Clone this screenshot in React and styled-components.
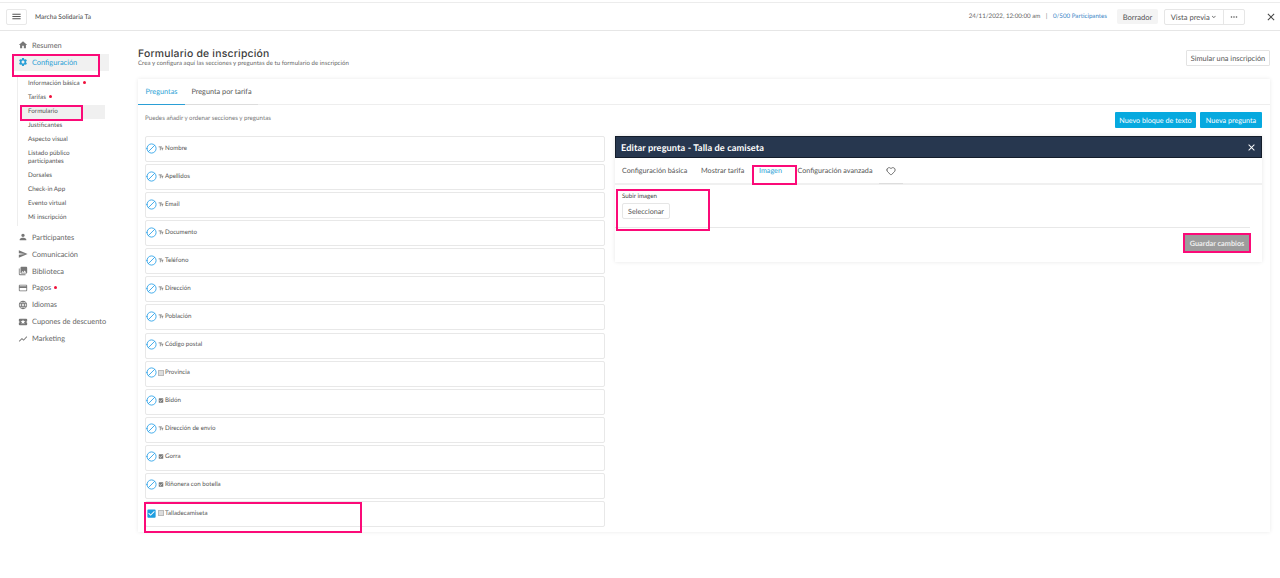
import React from 'react';
import styled, { createGlobalStyle } from 'styled-components';
import {
  MdHome, MdSettings, MdPerson, MdSend, MdPhotoLibrary, MdCreditCard, MdLanguage,
  MdLocalActivity, MdShowChart, MdMenu, MdClose, MdCheckBox, MdTextFields, MdMoreHoriz, MdKeyboardArrowDown,
} from 'react-icons/md';
import { Ban, Heart } from 'lucide-react';

const Global = createGlobalStyle`
  html, body { margin: 0; padding: 0; background: #fff; }
  * { box-sizing: border-box; text-rendering: geometricPrecision; }
  body { font-family: Lato, "Open Sans", sans-serif; color: #555; }
`;

const Page = styled.div`
  position: relative;
  width: 1280px;
  height: 578px;
  overflow: hidden;
  background: #fff;
  padding-top: 2px;
`;

const Header = styled.header`
  height: 29px;
  display: flex;
  align-items: center;
  border-top: 1px solid #ececec;
  border-bottom: 1px solid #e6e6e6;
  padding: 0 3px 0 6px;
`;
const MenuButton = styled.div`
  width: 21px; height: 16px;
  display: flex; align-items: center; justify-content: center;
  border: 1px solid #e8e8e8; border-radius: 2px; color: #555; font-size: 11px;
`;
const EventName = styled.span`
  margin-left: 8px; font-size: 6.6px; color: #444; flex: 1;
`;
const DateText = styled.span`font-size: 6.2px; color: #666;`;
const Sep = styled.span`font-size: 6.5px; color: #888; margin: 0 5.5px;`;
const Count = styled.span`font-size: 6.2px; color: #3d85c6; margin-right: 10px; white-space: nowrap;`;
const Badge = styled.span`
  width: 41px; height: 15px; display: flex; align-items: center; justify-content: center;
  font-size: 7.6px; color: #555; background: #f4f4f4; border-radius: 2px; margin-right: 6px;
`;
const Group = styled.div`
  display: flex; height: 16px; border: 1px solid #e6e6e6; border-radius: 2px; margin-right: 20px;
`;
const GroupItem = styled.div`
  display: flex; align-items: center; justify-content: center;
  width: ${p => p.$w}px; font-size: 7.6px; color: #555; white-space: nowrap;
  & + & { border-left: 1px solid #e6e6e6; }
`;
const CloseBtn = styled.div`
  width: 12px; display: flex; color: #444; font-size: 12px;
`;

const Body = styled.div`display: flex; align-items: flex-start;`;

const Sidebar = styled.nav`
  width: 138px; flex-shrink: 0; padding: 6px 29px 0 14px;
`;
const NavItem = styled.div`
  height: 16.9px; display: flex; align-items: center; gap: 4px; white-space: nowrap;
  font-size: 7.4px; color: ${p => (p.$active ? '#2a9fd6' : '#666')};
  & > svg { flex-shrink: 0; font-size: 10px; color: ${p => (p.$active ? '#2a9fd6' : '#777')}; margin-left: 4px; }
`;
const ActiveNav = styled(NavItem)`
  background: #f1f1f1; width: 95px;
`;
const SubList = styled.div`
  margin: 6px 0 3px 3px; border-left: 1px solid #eee; padding: 0 0 1px 3px;
  width: 88px;
`;
const SubItem = styled.div`
  min-height: 14px; padding: 3px 0 3px 7px; line-height: 8px;
  font-size: 6.3px; color: #555;
  background: ${p => (p.$active ? '#f0f0f0' : 'transparent')};
`;
const Dot = styled.i`
  display: inline-block; width: 3px; height: 3px; border-radius: 50%;
  background: #f0103c; margin-left: 3px; vertical-align: 1px;
`;

const Main = styled.main`
  flex: 1; padding: 17px 10px 0 0;
`;
const TitleRow = styled.div`
  display: flex; justify-content: space-between; align-items: flex-start; height: 31px;
`;
const Title = styled.h1`
  margin: 0; font: 500 10.4px/12px Inter, "Open Sans", sans-serif; letter-spacing: .22px; color: #3b3b3b;
`;
const Subtitle = styled.p`
  margin: 0; font-size: 6.1px; line-height: 7px; color: #666; letter-spacing: .04px;
`;
const SimButton = styled.button`
  width: 84px; height: 16px; padding: 0; margin-top: 2px; background: #fff;
  border: 1px solid #e3e3e3; border-radius: 1px; font: 7.4px Lato, sans-serif; color: #555;
`;
const Card = styled.section`
  height: 453px; background: #fff; box-shadow: 0 0 4px rgba(0,0,0,.09);
`;
const MainTabs = styled.div`
  display: flex; height: 26px; border-bottom: 1px solid #eee;
`;
const MainTab = styled.div`
  width: ${p => p.$w}px; display: flex; align-items: center; justify-content: center;
  font-size: 7.3px; margin-bottom: -1px;
  color: ${p => (p.$active ? '#2a9fd6' : '#555')};
  border-bottom: 1px solid ${p => (p.$active ? '#2a9fd6' : '#ddd')};
`;
const CardBody = styled.div`padding: 7px 8px 0 7px;`;
const ToolRow = styled.div`
  display: flex; justify-content: space-between; align-items: center; height: 16px; margin-bottom: 8px;
`;
const Hint = styled.span`font-size: 6.2px; color: #777; padding-bottom: 4px;`;
const Actions = styled.div`display: flex; gap: 4px;`;
const BlueButton = styled.button`
  width: ${p => p.$w}px; height: 16px; padding: 0; border: 0; border-radius: 1px;
  background: #06a9df; color: #fff; font: 7.2px Lato, sans-serif; white-space: nowrap;
`;
const Columns = styled.div`display: flex; gap: 10px; align-items: flex-start;`;
const Questions = styled.div`
  width: 460px; display: flex; flex-direction: column; gap: 2.08px;
`;
const Question = styled.div`
  height: 26px; display: flex; align-items: center; gap: 1px; padding: 0 0 2px 0;
  border: 1px solid #e8e8e8; border-radius: 2px;
  font-size: 6.2px; color: #555;
`;
const BanIcon = styled(Ban)`
  width: 11px; height: 11px; color: #36a6ea; flex-shrink: 0; transform: scaleX(-1);
`;
const TypeIcon = styled.span`
  display: flex; align-items: center; width: 6px; font-size: 7px; color: #777; flex-shrink: 0;
`;
const LightBox = styled.span`
  width: 6px; height: 6px; background: #ddd; border: 1px solid #bbb; display: block;
`;
const CheckedIcon = styled(MdCheckBox)`font-size: 11px; color: #1f9ee0; flex-shrink: 0;`;

const Editor = styled.div`
  flex: 1; box-shadow: 0 0 4px rgba(0,0,0,.1); height: 126px;
`;
const EditorHead = styled.div`
  height: 22px; background: #27374f; border: 1px solid #141d2b;
  display: flex; justify-content: space-between; align-items: center; padding: 0 4px 0 5px;
  color: #fff; font-size: 9.2px; font-weight: 700; letter-spacing: .1px;
  & > svg { font-size: 11px; }
`;
const EditorTabs = styled.div`
  display: flex; height: 27px; border-bottom: 2px solid #f0f0f0; align-items: center; padding-left: 7px;
`;
const EditorTab = styled.span`
  font-size: 7.2px; white-space: nowrap; color: ${p => (p.$active ? '#2a9fd6' : '#555')};
  width: ${p => p.$w}px;
`;
const HeartTab = styled.span`
  display: flex; align-items: center; justify-content: center; width: 24px; height: 25px; color: #555;
  border-bottom: 1px solid #ddd; margin-top: 1px;
`;
const EditorBody = styled.div`padding: 8px 12px 0 7px;`;
const Label = styled.div`font-size: 6.2px; color: #444; line-height: 8px;`;
const GhostButton = styled.button`
  display: block; width: 48px; height: 16px; padding: 0; margin-top: 2px; background: #fff;
  border: 1px solid #e6e6e6; border-radius: 2px; font: 7.2px Lato, sans-serif; color: #555;
`;
const Rule = styled.hr`margin: 8px 0 7px -7px; border: 0; border-top: 1px solid #e8e8e8;`;
const SaveRow = styled.div`display: flex; justify-content: flex-end;`;
const SaveButton = styled.button`
  width: 64px; height: 16px; padding: 0; border: 0; background: #9c9c9c; color: #eee;
  font: 700 7.3px Lato, sans-serif; margin-right: 1px;
`;
const Highlight = styled.div`
  position: absolute; border: 2px solid #fb0a78; pointer-events: none;
  left: ${p => p.$x}px; top: ${p => p.$y}px; width: ${p => p.$w}px; height: ${p => p.$h}px;
`;

const subs = [
  ['Información básica', true], ['Tarifas', true], ['Formulario', false, true], ['Justificantes'],
  ['Aspecto visual'], ['Listado público participantes'], ['Dorsales'], ['Check-in App'], ['Evento virtual'], ['Mi inscripción'],
];
const rest = [
  [MdPerson, 'Participantes'], [MdSend, 'Comunicación'], [MdPhotoLibrary, 'Biblioteca'], [MdCreditCard, 'Pagos', true],
  [MdLanguage, 'Idiomas'], [MdLocalActivity, 'Cupones de descuento'], [MdShowChart, 'Marketing'],
];
const questions = [
  ['Nombre', 't'], ['Apellidos', 't'], ['Email', 't'], ['Documento', 't'], ['Teléfono', 't'], ['Dirección', 't'],
  ['Población', 't'], ['Código postal', 't'], ['Provincia', 'l'], ['Bidón', 'c'], ['Dirección de envío', 't'],
  ['Gorra', 'c'], ['Riñonera con botella', 'c'], ['Talladecamiseta', 'l', true],
];
const marks = [
  [12, 54, 88, 23], [20, 105, 63, 16], [752, 165, 45, 20], [616, 189, 94, 42], [1183, 233, 68, 20], [144, 502, 218, 31],
];

function TypeGlyph({ kind }) {
  if (kind === 't') return <TypeIcon><MdTextFields /></TypeIcon>;
  if (kind === 'c') return <TypeIcon><MdCheckBox /></TypeIcon>;
  return <TypeIcon><LightBox /></TypeIcon>;
}

export default function App() {
  return (
    <Page>
      <Global />
      <Header>
        <MenuButton><MdMenu /></MenuButton>
        <EventName>Marcha Solidaria Ta</EventName>
        <DateText>24/11/2022, 12:00:00 am</DateText>
        <Sep>|</Sep>
        <Count>0/500 Participantes</Count>
        <Badge>Borrador</Badge>
        <Group>
          <GroupItem $w={58}>Vista previa <MdKeyboardArrowDown /></GroupItem>
          <GroupItem $w={21}><MdMoreHoriz size={10} /></GroupItem>
        </Group>
        <CloseBtn><MdClose /></CloseBtn>
      </Header>
      <Body>
        <Sidebar>
          <NavItem><MdHome />Resumen</NavItem>
          <ActiveNav $active><MdSettings />Configuración</ActiveNav>
          <SubList>
            {subs.map(([name, dot, active]) => (
              <SubItem key={name} $active={active}>{name}{dot && <Dot />}</SubItem>
            ))}
          </SubList>
          {rest.map(([Icon, name, dot]) => (
            <NavItem key={name}><Icon /><span>{name}{dot && <Dot />}</span></NavItem>
          ))}
        </Sidebar>
        <Main>
          <TitleRow>
            <div>
              <Title>Formulario de inscripción</Title>
              <Subtitle>Crea y configura aquí las secciones y preguntas de tu formulario de inscripción</Subtitle>
            </div>
            <SimButton>Simular una inscripción</SimButton>
          </TitleRow>
          <Card>
            <MainTabs>
              <MainTab $w={47} $active>Preguntas</MainTab>
              <MainTab $w={73}>Pregunta por tarifa</MainTab>
            </MainTabs>
            <CardBody>
              <ToolRow>
                <Hint>Puedes añadir y ordenar secciones y preguntas</Hint>
                <Actions>
                  <BlueButton $w={81}>Nuevo bloque de texto</BlueButton>
                  <BlueButton $w={62}>Nueva pregunta</BlueButton>
                </Actions>
              </ToolRow>
              <Columns>
                <Questions>
                  {questions.map(([name, kind, checked]) => (
                    <Question key={name}>
                      {checked ? <CheckedIcon /> : <BanIcon strokeWidth={2} />}
                      <TypeGlyph kind={kind} />
                      {name}
                    </Question>
                  ))}
                </Questions>
                <Editor>
                  <EditorHead>
                    Editar pregunta - Talla de camiseta
                    <MdClose />
                  </EditorHead>
                  <EditorTabs>
                    <EditorTab $w={79}>Configuración básica</EditorTab>
                    <EditorTab $w={58}>Mostrar tarifa</EditorTab>
                    <EditorTab $w={38.5} $active>Imagen</EditorTab>
                    <EditorTab $w={81}>Configuración avanzada</EditorTab>
                    <HeartTab><Heart size={10} /></HeartTab>
                  </EditorTabs>
                  <EditorBody>
                    <Label>Subir imagen</Label>
                    <GhostButton>Seleccionar</GhostButton>
                    <Rule />
                    <SaveRow><SaveButton>Guardar cambios</SaveButton></SaveRow>
                  </EditorBody>
                </Editor>
              </Columns>
            </CardBody>
          </Card>
        </Main>
      </Body>
      {marks.map(([x, y, w, h]) => (
        <Highlight key={`${x}-${y}`} $x={x} $y={y} $w={w} $h={h} />
      ))}
    </Page>
  );
}
